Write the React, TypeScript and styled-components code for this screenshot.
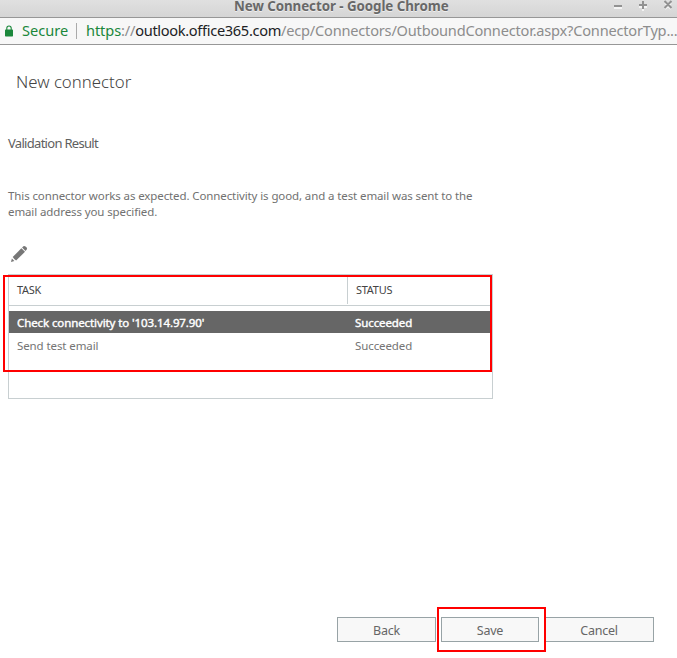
import React from "react";
import styled, { createGlobalStyle } from "styled-components";

const GlobalStyle = createGlobalStyle`
  * { box-sizing: border-box; }
  body { margin: 0; background: #fff; font-family: "Noto Sans", "Open Sans", sans-serif; overflow: hidden; }
`;

const Window = styled.div`
  position: relative;
  display: flex;
  flex-direction: column;
  width: 677px;
  height: 658px;
  background: #fff;
  white-space: nowrap;
`;

const TitleBar = styled.header`
  display: grid;
  grid-template-columns: 1fr auto;
  flex: none;
  height: 18px;
  padding-left: 234px;
  border-bottom: 1px solid #979797;
  background: linear-gradient(#e0e0e0, #d5d5d5);
`;

const WindowTitle = styled.div`
  height: 17px;
  font-size: 13.33px;
  line-height: 12px;
  font-weight: 700;
  letter-spacing: -0.05px;
  color: #686868;
  text-shadow: 0 1px 0 #eee;
`;

const WindowControls = styled.svg`
  display: block;
  width: 67px;
  height: 17px;
`;

const AddressBar = styled.div`
  display: flex;
  align-items: center;
  flex: none;
  height: 27px;
  padding-left: 5px;
  border-bottom: 1px solid #979797;
  background: #f7f7f7;
  font-size: 14.6px;
`;

const Lock = styled.svg`
  width: 8px;
  height: 12px;
  margin-right: 9px;
  flex: none;
`;

const Secure = styled.span`
  flex: none;
  width: 54px;
  height: 26px;
  line-height: 24px;
  color: #1b873b;
`;

const Separator = styled.span`
  flex: none;
  width: 1px;
  height: 16px;
  margin-right: 9px;
  background: #aaa;
`;

const Url = styled.span`
  flex: none;
  height: 26px;
  line-height: 24px;
  letter-spacing: -0.21px;
  color: #8d8d8d;
`;
const Scheme = styled.span`
  letter-spacing: -0.1px;
  color: #1b873b;
`;
const Host = styled.span`
  letter-spacing: -0.32px;
  color: #202124;
`;

const Page = styled.main`
  display: flex;
  flex-direction: column;
  flex: 1;
  padding: 0 0 16px 8px;
`;

const Heading = styled.h1`
  margin: 24px 0 0 8px;
  height: 26px;
  font-size: 16.8px;
  line-height: 26px;
  font-weight: 300;
  color: #444;
`;

const SubHeading = styled.h2`
  margin: 38px 0 0;
  height: 20px;
  font-size: 13px;
  line-height: 20px;
  font-weight: 400;
  letter-spacing: -0.7px;
  color: #606060;
`;

const Description = styled.p`
  margin: 35px 0 0;
  font-size: 11.5px;
  line-height: 16px;
  letter-spacing: -0.11px;
  color: #717171;
`;

const EditIcon = styled.svg`
  display: block;
  width: 18px;
  height: 18px;
  margin: 25px 0 0 2px;
`;

const Table = styled.section`
  width: 485px;
  height: 125px;
  margin-top: 11px;
  border: 1px solid #c8cfd1;
`;

const Row = styled.div<{ $selected?: boolean }>`
  display: grid;
  grid-template-columns: 338px 1fr;
  width: 482px;
  height: 22px;
  padding-left: 8px;
  font-size: 11.5px;
  line-height: 24px;
  letter-spacing: -0.1px;
  color: ${(p) => (p.$selected ? "#fff" : "#747474")};
  background: ${(p) => (p.$selected ? "#666" : "transparent")};
  -webkit-text-stroke: ${(p) => (p.$selected ? "0.4px #fff" : "0")};
  & + & { margin-top: 1px; }
`;

const HeaderRow = styled.div`
  display: grid;
  grid-template-columns: 339px 1fr;
  height: 31px;
  margin-bottom: 5px;
  padding-top: 1px;
  border-bottom: 1px solid #c8cfd1;
`;

const HeaderCell = styled.div`
  height: 28px;
  padding-left: 8px;
  font-size: 10.9px;
  line-height: 28px;
  letter-spacing: -0.22px;
  color: #444;
  & + & { margin-left: -1px; border-left: 1px solid #c8cfd1; }
`;

const Actions = styled.footer`
  display: flex;
  margin: auto 0 0 329px;
`;

const Button = styled.button<{ $width: number; $gap?: number }>`
  width: ${(p) => p.$width}px;
  height: 25px;
  margin: 0 ${(p) => p.$gap ?? 0}px 0 0;
  padding: 2px 0 0;
  border: 1px solid #98a3a6;
  background: #f8f8f8;
  font: 12.5px/21px "Noto Sans", "Open Sans", sans-serif;
  letter-spacing: -0.25px;
  color: #666;
`;

const Highlight = styled.div<{ $x: number; $y: number; $w: number; $h: number }>`
  position: absolute;
  left: ${(p) => p.$x}px;
  top: ${(p) => p.$y}px;
  width: ${(p) => p.$w}px;
  height: ${(p) => p.$h}px;
  border: 2px solid #f00;
  pointer-events: none;
`;

const tasks = [
  { name: "Check connectivity to '103.14.97.90'", status: "Succeeded", selected: true },
  { name: "Send test email", status: "Succeeded", selected: false },
];

export default function App() {
  return (
    <Window>
      <GlobalStyle />
      <TitleBar>
        <WindowTitle>New Connector - Google Chrome</WindowTitle>
        <WindowControls viewBox="0 0 67 17" fill="none" strokeWidth="2">
          <path d="M4 8H12M29 7H37M33 3V11M55 3L61 9M61 3L55 9" stroke="#f4f4f4" />
          <path d="M4 6H12M29 5H37M33 1V9M54.5 1L61.5 8M61.5 1L54.5 8" stroke="#929292" />
        </WindowControls>
      </TitleBar>
      <AddressBar>
        <Lock viewBox="0 0 8 12">
          <path d="M1.8 5V3.2a2.2 2.2 0 0 1 4.4 0V5" fill="none" stroke="#1b873b" strokeWidth="1.1" />
          <rect y="4.5" width="8" height="7" rx="0.7" fill="#1b873b" />
        </Lock>
        <Secure>Secure</Secure>
        <Separator />
        <Url>
          <Scheme>https</Scheme>://<Host>outlook.office365.com</Host>/ecp/Connectors/OutboundConnector.aspx?ConnectorTyp...
        </Url>
      </AddressBar>
      <Page>
        <Heading>New connector</Heading>
        <SubHeading>Validation Result</SubHeading>
        <Description>
          This connector works as expected. Connectivity is good, and a test email was sent to the
          <br />
          email address you specified.
        </Description>
        <EditIcon viewBox="0 0 18 18" fill="#777">
          <path d="M1 17L1.9 13.6 4.4 16.1Z" />
          <path d="M2.7 12L11.4 3.2 15 6.8 6.1 15.5Q4.2 14.3 2.7 12Z" />
          <path d="M12.1 2.6L13.4 1.3Q14.4 .5 15.5 1.4L16.7 2.6Q17.5 3.6 16.7 4.6L15.5 6Z" />
        </EditIcon>
        <Table>
          <HeaderRow>
            <HeaderCell>TASK</HeaderCell>
            <HeaderCell>STATUS</HeaderCell>
          </HeaderRow>
          {tasks.map((t) => (
            <Row key={t.name} $selected={t.selected}>
              <span>{t.name}</span>
              <span>{t.status}</span>
            </Row>
          ))}
        </Table>
        <Actions>
          <Button $width={99} $gap={5}>Back</Button>
          <Button $width={98} $gap={5}>Save</Button>
          <Button $width={110}>Cancel</Button>
        </Actions>
      </Page>
      <Highlight $x={3} $y={275} $w={489} $h={97} />
      <Highlight $x={437} $y={607} $w={109} $h={45} />
    </Window>
  );
}
